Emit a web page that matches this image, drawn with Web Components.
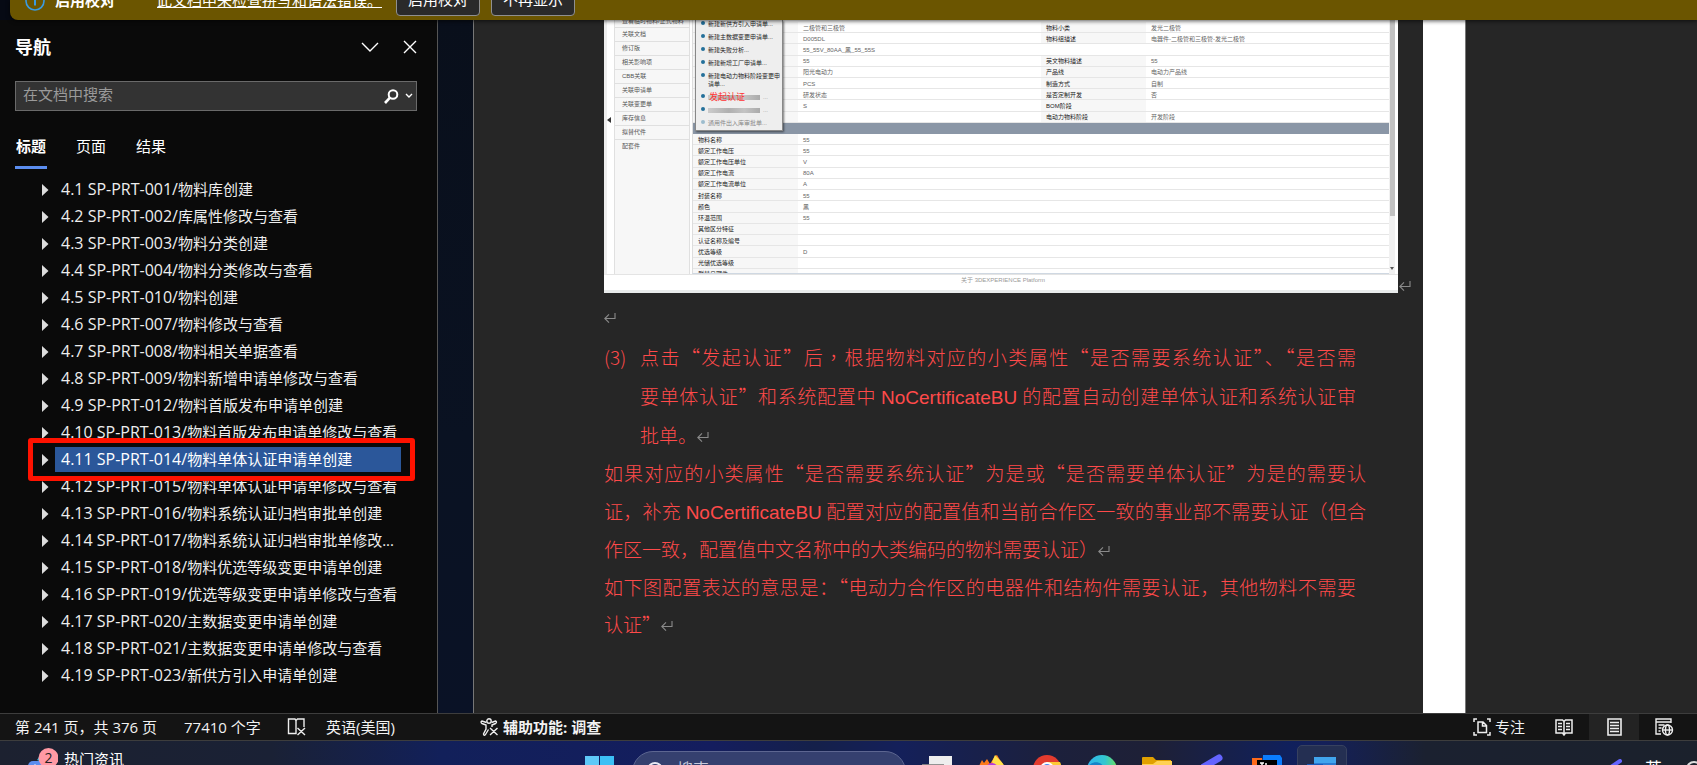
<!DOCTYPE html>
<html lang="zh-CN">
<head>
<meta charset="utf-8">
<title>Word</title>
<style>
  html, body { margin: 0; height: 100%; background: #0a0a0a; overflow: hidden; }
  body { font-family: "Open Sans", "Noto Sans CJK SC", sans-serif; font-size: 15px; color: #fff; }
</style>
</head>
<body>
<word-window></word-window>
<script>
const define = (name, html, setup) => {
  const tpl = document.createElement('template');
  tpl.innerHTML = '<style>*{box-sizing:border-box}button{font:inherit;color:inherit;background:none;border:0;padding:0;margin:0}svg{display:block;flex:none}</style>' + html;
  customElements.define(name, class extends HTMLElement {
    constructor() {
      super();
      this.attachShadow({ mode: 'open' }).append(tpl.content.cloneNode(true));
      if (setup) setup(this.shadowRoot, this);
    }
  });
};

define('word-window', `
<style>
  :host { display: flex; flex-direction: column; height: 100vh; overflow: hidden; background: #060a14; }
  main { flex: 1; min-height: 0; display: flex; }
  nav-pane { flex: none; width: 438px; }
  .gutter { flex: none; width: 35px; background: linear-gradient(#090f1b, #0a1222 60%, #0a1226); }
  doc-canvas { flex: 1; min-width: 0; }
</style>
<message-bar></message-bar>
<main><nav-pane></nav-pane><div class="gutter"></div><doc-canvas></doc-canvas></main>
<status-bar></status-bar>
<task-bar></task-bar>`);

define('message-bar', `
<style>
  :host { display: block; position: relative; z-index: 2; flex: none; padding-left: 10px; }
  .bar { height: 20px; overflow: hidden; display: flex; align-items: flex-end; padding: 0 0 4px 15px; background: #6b5500;
    border-radius: 0 0 0 8px; box-shadow: 0 1px 4px #000a; }
  svg { margin-bottom: 5px; }
  b, a { white-space: nowrap; height: 20px; }
  b { margin: 0 0 6px 10px; width: 102px; line-height: 20px; }
  a { color: #fff; text-decoration: none; border-bottom: 1px solid #fff; margin-bottom: 8px; line-height: 24px; }
  button { height: 32px; width: 84px; border: 1px solid #8f8f8f; border-radius: 4px; background: #2a2a2a; margin-left: 14px; line-height: 20px; padding-bottom: 2px; }
  button + button { margin-left: 11px; }
</style>
<div class="bar">
  <svg width="20" height="20" viewBox="0 0 20 20" fill="none" stroke="#3b9be0" stroke-width="1.6"><circle cx="10" cy="10" r="9"/><path d="M10 8.5v6M10 5v1.5" stroke-width="2"/></svg>
  <b>启用校对</b><a href="#">此文档中未检查拼写和语法错误。</a><button>启用校对</button><button>不再显示</button>
</div>`);

define('nav-pane', `
<style>
  :host { display: flex; flex-direction: column; background: #0a0a0a; border-right: 1px solid #555; padding-left: 15px; overflow: hidden; }
  header { display: flex; align-items: center; padding-top: 13px; height: 41px; padding-right: 20px; }
  h2 { flex: 1; margin: 0; font-size: 18px; line-height: 28px; }
  header button + button { margin-left: 24px; }
  .find { display: flex; align-items: center; margin: 20px 20px 0 0; height: 30px; background: #333; border: 1px solid #6a6a6a; padding-right: 3px; }
  input { flex: 1; min-width: 0; background: none; border: 0; outline: 0; color: #fff; font: inherit; line-height: 20px; padding: 0 7px 4px; }
  input::placeholder { color: #9a9a9a; opacity: 1; }
  .find button + button { margin-left: 6px; }
  .tabs { display: flex; gap: 28px; margin-top: 22px; }
  .tabs button { width: 32px; height: 36px; line-height: 26px; padding-bottom: 7px; border-bottom: 3px solid transparent; white-space: nowrap; }
  .tabs [aria-selected=true] { font-weight: bold; border-color: #5b8def; }
  ul { list-style: none; margin: 7px 0 0; padding: 0; }
</style>
<header><h2>导航</h2>
  <button aria-label="选项"><svg width="18" height="12" viewBox="0 0 18 12" fill="none" stroke="#fff" stroke-width="1.4"><path d="M1 2l8 8 8-8"/></svg></button>
  <button aria-label="关闭"><svg width="14" height="14" viewBox="0 0 14 14" fill="none" stroke="#fff" stroke-width="1.4"><path d="M1 1l12 12M13 1L1 13"/></svg></button>
</header>
<div class="find"><input type="text" aria-label="在文档中搜索" placeholder="在文档中搜索">
  <button aria-label="搜索"><svg width="15" height="15" viewBox="0 0 15 15" fill="none" stroke="#fff" stroke-width="2"><circle cx="9" cy="5.5" r="4.3"/><path d="M6 8.7L1 14" stroke-width="2.6"/></svg></button>
  <button aria-label="搜索选项"><svg width="8" height="6" viewBox="0 0 8 6" fill="none" stroke="#fff" stroke-width="1.4"><path d="M1 1l3 3 3-3"/></svg></button>
</div>
<div class="tabs" role="tablist"><button role="tab" aria-selected="true">标题</button><button role="tab">页面</button><button role="tab">结果</button></div>
<ul></ul>`, root => {
  const items = ['4.1 SP-PRT-001/|物料库创建', '4.2 SP-PRT-002/|库属性修改与查看', '4.3 SP-PRT-003/|物料分类创建', '4.4 SP-PRT-004/|物料分类修改与查看',
    '4.5 SP-PRT-010/|物料创建', '4.6 SP-PRT-007/|物料修改与查看', '4.7 SP-PRT-008/|物料相关单据查看', '4.8 SP-PRT-009/|物料新增申请单修改与查看',
    '4.9 SP-PRT-012/|物料首版发布申请单创建', '4.10 SP-PRT-013/|物料首版发布申请单修改与查看', '4.11 SP-PRT-014/|物料单体认证申请单创建',
    '4.12 SP-PRT-015/|物料单体认证申请单修改与查看', '4.13 SP-PRT-016/|物料系统认证归档审批单创建', '4.14 SP-PRT-017/|物料系统认证归档审批单修改...',
    '4.15 SP-PRT-018/|物料优选等级变更申请单创建', '4.16 SP-PRT-019/|优选等级变更申请单修改与查看', '4.17 SP-PRT-020/|主数据变更申请单创建',
    '4.18 SP-PRT-021/|主数据变更申请单修改与查看', '4.19 SP-PRT-023/|新供方引入申请单创建'];
  root.querySelector('ul').innerHTML = items.map((t, i) => {
    const [code, name] = t.split('|');
    return `<heading-item role="listitem"${i === 10 ? ' selected' : ''}><span slot="code">${code}</span>${name}</heading-item>`;
  }).join('');
});

define('heading-item', `
<style>
  :host { display: flex; align-items: center; position: relative; height: 27px; padding: 0 36px 0 27px; color: #eee; }
  .label { flex: 1; height: 25px; line-height: 24px; margin-left: 6px; padding-left: 6px; white-space: nowrap; overflow: hidden; display: flex; }
  ::slotted(span) { font-size: 16px; }
  :host([selected]) .label { background: #2b579a; color: #fff; }
  .mark { display: none; }
  :host([selected]) .mark { display: block; position: absolute; inset: -8px 22px -8px 13px; border: 5px solid #ff1200; border-radius: 3px; z-index: 1; }
</style>
<svg width="7" height="12" viewBox="0 0 7 12"><path d="M0 0l6.5 6L0 12z" fill="#ddd"/></svg>
<div class="label"><slot name="code"></slot><slot></slot></div><i class="mark"></i>`);

define('return-mark', `
<style>:host { display: inline-block; width: 12px; height: 12px; }</style>
<svg width="12" height="12" viewBox="0 0 12 12" fill="none" stroke="#8a8a8a" stroke-width="1.1"><path d="M11 1v5.5H1M5 2.3L.8 6.5 5 10.7"/></svg>`);

define('doc-canvas', `
<style>
  :host { display: flex; background: #262626; border-left: 1px solid #777; overflow: hidden; }
  article { flex: 1; min-width: 0; padding-left: 130px; font-family: "Noto Sans CJK SC", sans-serif; font-size: 19px; color: #ff4a4a; font-weight: 300; }
  .edge { flex: none; width: 43px; background: #fff; border-right: 1px solid #777; }
  .desk { flex: none; width: 231px; }
  figure { margin: 0; display: flex; align-items: flex-end; }
  part-screenshot { flex: none; width: 794px; }
  figure return-mark { margin: 0 0 1px 1px; }
  .blank { height: 44px; display: flex; align-items: center; padding-top: 6px; }
  p { margin: 0; width: 762px; }
  .step { display: flex; }
  .no { flex: none; width: 36px; line-height: 39px; }
  .lines { flex: 1; }
  .l { display: block; white-space: nowrap; height: 38px; line-height: 38px; }
  .step .l { height: 39px; line-height: 39px; }
  .tail .l { height: 37px; line-height: 37px; }
  .j { text-align: justify; text-align-last: justify; }
  .tuck { padding-right: 10px; }
  .en { font-family: "Liberation Sans", sans-serif; font-weight: 400; }
  .tc { font-family: "Noto Sans CJK TC", sans-serif; }
</style>
<article>
  <figure><part-screenshot></part-screenshot><return-mark></return-mark></figure>
  <div class="blank"><return-mark></return-mark></div>
  <p class="step"><span class="no">(3)</span><span class="lines">
    <span class="l j tuck">点击“发起认证”<span class="tc" lang="zh-TW">后，</span>根据物料对应的小类属性“是否需要系统认证”、“是否需</span>
    <span class="l j tuck">要单体认证”和系统配置中 <span class="en">NoCertificateBU</span> 的配置自动创建单体认证和系统认证审</span>
    <span class="l">批单。<return-mark></return-mark></span></span></p>
  <p><span class="l j">如果对应的小类属性“是否需要系统认证”为是或“是否需要单体认证”为是的需要认</span>
    <span class="l j">证，补充 <span class="en">NoCertificateBU</span> 配置对应的配置值和当前合作区一致的事业部不需要认证（但合</span>
    <span class="l">作区一致，配置值中文名称中的大类编码的物料需要认证）<return-mark></return-mark></span></p>
  <p class="tail"><span class="l j tuck">如下图配置表达的意思是：“电动力合作区的电器件和结构件需要认证，其他物料不需要</span>
    <span class="l">认证”<return-mark></return-mark></span></p>
</article><div class="edge"></div><div class="desk"></div>`);

define('part-screenshot', `
<style>
  :host { display: flex; flex-direction: column; height: 273px; background: #fff; color: #444; font: 400 6px/8px "Liberation Sans", "Noto Sans CJK SC", sans-serif; border-bottom: 3px solid #e8ebeb; }
  .body { height: 255px; display: flex; overflow: hidden; border-left: 3px solid #eee; border-bottom: 1px solid #e4e4e4; position: relative; }
  .fold { width: 7px; display: flex; align-items: center; }
  .fold svg { margin-bottom: 54px; }
  aside { width: 76px; background: #f7f7f7; border: solid #e0e0e0; border-width: 0 1px; display: flex; flex-direction: column; margin-right: 2px; }
  aside a { height: 14px; flex: none; line-height: 13px; border-bottom: 1px solid #e0e0e0; padding-left: 7px; color: #555; text-decoration: none; white-space: nowrap; }
  aside a:first-child { height: 8px; line-height: 3px; }
  aside a:last-child { border: 0; }
  .data { flex: 1; overflow: hidden; display: flex; flex-direction: column; border-left: 1px solid #ddd; border-bottom: 1px solid #cfd8e2; }
  table { width: 100%; border-collapse: collapse; table-layout: fixed; flex: none; }
  th, td { padding: 1px 0 0 5px; text-align: left; font-weight: 400; border-bottom: 1px solid #e6e6e6; white-space: nowrap; line-height: 8px; overflow: hidden; }
  th { background: #f7f7f7; width: 105px; color: #222; }
  td { color: #666; }
  .top { height: 101px; margin-top: 2px; }
  .low { height: 146px; }
  .band { height: 11px; background: #8a96a6; flex: none; }
  .scroll { width: 6px; margin-right: 3px; background: #f1f1f1; display: flex; flex-direction: column; justify-content: space-between; align-items: center; padding-bottom: 4px; }
  .scroll i { width: 5px; height: 196px; background: #c1c1c1; }
  footer { flex: 1; text-align: center; line-height: 11px; color: #999; padding-left: 4px; }
  menu { position: absolute; left: 88px; top: 0; width: 88px; height: 111px; margin: 0; padding: 0 0 0 5px; background: #eee; border: 1px solid #888; border-top: 0; box-shadow: 1px 1px 2px #0008; list-style: none; color: #222; }
  li { display: flex; gap: 3px; line-height: 8px; margin-bottom: 5px; position: relative; }
  li::before { content: ""; width: 4px; height: 4px; border-radius: 2px; background: #24709a; flex: none; margin-top: 1px; }
  .hid { height: 8px; color: #999; }
  .hid span { background: linear-gradient(90deg, #ccc, #b0b0b0 40%, #c4c4c4 70%, #aaa); width: 52px; height: 5px; margin-top: 2px; }
  .hid b { position: absolute; left: 8px; top: 0; font-size: 9px; font-weight: 400; line-height: 9px; color: #f33; }
  .off { color: #888; } .off::before { opacity: .4; }
</style>
<div class="body">
  <div class="fold"><svg width="4" height="6" viewBox="0 0 4 6"><path d="M4 0v6L0 3z" fill="#333"/></svg></div>
  <aside><a href="#">查看临时物料/正式物料</a><a href="#">关联文档</a><a href="#">修订版</a><a href="#">相关影响项</a><a href="#">CBB关联</a><a href="#">关联申请单</a><a href="#">关联变更单</a><a href="#">库存信息</a><a href="#">拟替代件</a><a href="#">配套件</a></aside>
  <div class="data"><table class="top"></table><div class="band"></div><table class="low"></table></div>
  <div class="scroll"><i></i><svg width="4" height="3" viewBox="0 0 4 3"><path d="M0 0h4L2 3z" fill="#555"/></svg></div>
  <menu><li>新建新供方引入申请单...</li><li>新建主数据变更申请单...</li><li>新建失败分析...</li><li>新建新增工厂申请单...</li><li>新建电动力物料阶段变更申请单...</li><li class="hid"><span></span>...<b>发起认证</b></li><li class="hid"><span></span>...</li><li class="off">通用件出入库审批单...</li></menu>
</div>
<footer>关于 3DEXPERIENCE Platform</footer>`, root => {
  root.querySelector('.top').innerHTML = [['二极管和三极管', '物料小类', '发光二极管'], ['D005DL', '物料组描述', '电器件-二极管和三极管-发光二极管'], ['55_55V_80AA_黑_55_55S'],
    ['55', '英文物料描述', '55'], ['阳光电动力', '产品线', '电动力产品线'], ['PCS', '制造方式', '自制'], ['研发状态', '是否定制开发', '否'], ['S', 'BOM阶段', ''], ['', '电动力物料阶段', '开发阶段']]
    .map(r => `<tr><th></th><td${r.length < 2 ? ' colspan="3"' : ''}>${r[0]}</td>${r[1] ? `<th>${r[1]}</th><td>${r[2]}</td>` : ''}</tr>`).join('');
  root.querySelector('.low').innerHTML = [['物料名称', '55'], ['额定工作电压', '55'], ['额定工作电压单位', 'V'], ['额定工作电流', '80A'], ['额定工作电流单位', 'A'], ['封装名称', '55'],
    ['颜色', '黑'], ['环温范围', '55'], ['其他区分特征', ''], ['认证名称及编号', ''], ['优选等级', 'D'], ['光储优选等级', ''], ['群替日期件', '']]
    .map(r => `<tr><th>${r[0]}</th><td>${r[1]}</td></tr>`).join('');
});

define('status-bar', `
<style>
  :host { display: flex; align-items: stretch; flex: none; height: 28px; background: #141414; border: solid #3d3d3d; border-width: 1px 0; padding-left: 15px; color: #f2f2f2; line-height: 26px; white-space: nowrap; }
  button { display: flex; align-items: center; gap: 4px; }
  .pages { width: 169px; } .words { width: 103px; } .proof { width: 39px; } .lang { width: 154px; }
  .acc { font-weight: bold; }
  .sp { flex: 1; }
  .v { width: 50px; justify-content: center; }
  .on { background: #232323; }
  .focus { margin-right: 14px; }
  .end { width: 8px; }
</style>
<button class="pages">第 241 页，共 376 页</button><button class="words">77410 个字</button>
<button class="proof" aria-label="校对"><svg width="19" height="18" viewBox="0 0 19 18" fill="none" stroke="#eee" stroke-width="1.4"><path d="M9 15.5H1.5V1H8l1 1.5v13zM9 2.5L10.5 1h6.5v8M10.5 10l7.5 7M18 10l-7.500 7"/></svg></button>
<button class="lang">英语(美国)</button>
<button class="acc"><svg width="19" height="18" viewBox="0 0 19 18" fill="none" stroke="#eee" stroke-width="1.4"><circle cx="9" cy="3" r="2.200"/><path d="M6.500 4.500L2 3c-1.500.5-1 2 0 2.500l4 1.500v4l-2.500 5c0 1.500 1.500 1.500 2 .5l3-5M11.500 4.500L15.500 3c1.500.5 1 2 0 2.500l-3.500 1.500v2M10 10l7.500 7M17.500 10L10 17"/></svg>辅助功能: 调查</button>
<span class="sp"></span>
<button class="focus"><svg width="18" height="18" viewBox="0 0 18 18" fill="none" stroke="#eee" stroke-width="1.500"><path d="M1 4V1h3M14 1h3v3M17 14v3h-3M4 17H1v-3M5 4h5l3.500 3.500V14.500H5zM9.500 4v4h4"/></svg>专注</button>
<button class="v" aria-label="阅读视图"><svg width="18" height="17" viewBox="0 0 18 17" fill="none" stroke="#eee" stroke-width="1.500"><path d="M9 2.500L7.500 1H1v13h6.500L9 16l1.500-2H17V1h-6.500L9 2.500V16M3 4.500h4M3 7.500h4M3 10.500h4M11 4.500h4M11 7.500h4M11 10.500h4"/></svg></button>
<button class="v on" aria-label="页面视图"><svg width="15" height="18" viewBox="0 0 15 18" fill="none" stroke="#eee" stroke-width="1.600"><path d="M1 1h13v16H1zM3 4.500h9M3 7.500h9M3 10.500h9M3 13.500h9"/></svg></button>
<button class="v" aria-label="Web 版式"><svg width="19" height="18" viewBox="0 0 19 18" fill="none" stroke="#eee" stroke-width="1.400"><path d="M6 16H1V1h15v4M1 4h15M3.500 7h6M3.500 10h3M3.500 13h2"/><circle cx="12.500" cy="12" r="5" fill="#141414"/><ellipse cx="12.500" cy="12" rx="2" ry="5"/><path d="M7.500 12h10"/></svg></button>
<span class="end"></span>`);

define('task-bar', `
<style>
  :host { display: flex; align-items: flex-start; flex: none; height: 24px; overflow: hidden; padding-left: 28px;
    background: linear-gradient(90deg, #1c2130 0, #1a2135 16%, #12205a 26%, #141d5e 42%, #14204a 48%, #14205a 53%, #1c203c 62%, #1e2036 68%, #10205c 76%, #14205a 78%, #1b2130 84%, #1b212c 100%); }
  .news { display: flex; width: 557px; line-height: 20px; padding-top: 8px; gap: 6px; }
  .news svg { margin-top: -2px; }
  .start { margin-top: 15px; }
  .search { display: flex; flex: none; width: 274px; height: 42px; margin: 10px 3px 0 18px; border: 1px solid #5d6691; border-radius: 21px; background: #35406f; padding: 8px 0 0 14px; gap: 11px; align-items: flex-start; }
  .search svg { margin-top: 2px; }
  .search input { font: inherit; font-size: 16px; line-height: 18px; background: none; border: 0; padding: 0; width: 150px; height: 18px; }
  input::placeholder { color: #c5c9dc; opacity: 1; }
  .app { width: 55px; flex: none; display: flex; justify-content: center; padding-top: 13px; }
  .on { width: 50px; margin: 4px 2px 0 3px; height: 48px; padding-top: 9px; border: 1px solid #37415f; border-radius: 5px; background: #242f52; }
  .sp { flex: 1; }
  .tray { display: flex; gap: 23px; }
  .tray span { font-size: 17px; line-height: 20px; padding-top: 18px; }
  .tray svg { margin-top: 18px; }
</style>
<button class="news"><svg width="30" height="30" viewBox="0 0 30 30"><path d="M0 19a5 5 0 0 1 5-5h20v16H0z" fill="#5b8def"/><path d="M9 13l4-6h6v10z" fill="#2bb5d8"/><path d="M3 22l4-5 4 5z" fill="#fff"/><circle cx="20.500" cy="11" r="10" fill="#ff99a4"/><text x="20.500" y="16" font-family="Open Sans" font-size="14" text-anchor="middle" fill="#222">2</text></svg><span>热门资讯</span></button>
<button class="start" aria-label="开始"><svg width="29" height="29"><path d="M0 0h14v14H0z" fill="#5fc9f8"/><path d="M15 0h14v14H15z" fill="#3cc0f5"/></svg></button>
<label class="search"><svg width="19" height="19" viewBox="0 0 19 19" fill="none" stroke="#e8eaf4" stroke-width="2"><circle cx="8" cy="8" r="7"/></svg><input type="text" placeholder="搜索" aria-label="搜索"></label>
<button class="app" aria-label="任务视图"><svg width="30" height="30"><path d="M7 2h23v20H7z" fill="#eee"/><path d="M0 10h22v18H0z" fill="#888" fill-opacity=".9"/></svg></button>
<button class="app" aria-label="Firefox"><svg width="28" height="30"><path d="M1 12l3-6 2 3 3-4 3 5 5-8 2-1 3 5 3 4 3 6v10H0z" fill="#ff7a1a"/><path d="M14 8l3-7c3 4 9 7 10 14l-6 3z" fill="#ffe14a"/><circle cx="14" cy="15" r="6" fill="#b53be0"/></svg></button>
<button class="app" aria-label="Chrome"><svg width="28" height="28"><circle cx="14" cy="15" r="14" fill="#e33b2e"/><path d="M14 8h13a14 14 0 0 1 1 10L14 20z" fill="#fdc935"/><path d="M0 12l8 8-4 5a14 14 0 0 1-4-13z" fill="#2ba24c"/><circle cx="14" cy="15" r="7" fill="#fff"/><circle cx="14" cy="15" r="5" fill="#4285f4"/></svg></button>
<button class="app" aria-label="Edge"><svg width="30" height="30"><defs><linearGradient id="e"><stop offset="0" stop-color="#2fb5ee"/><stop offset=".6" stop-color="#33c6d0"/><stop offset="1" stop-color="#6be060"/></linearGradient></defs><circle cx="15" cy="16" r="15" fill="url(#e)"/><path d="M1 13c4-7 13-5 15-1v14H4z" fill="#1583c8"/></svg></button>
<button class="app" aria-label="文件资源管理器"><svg width="30" height="26"><path d="M0 4q0-1 1-1h10l3 3h15v8H0z" fill="#e0a000"/><path d="M0 10h11l4-3h15v19H0z" fill="#ffd154"/></svg></button>
<button class="app" aria-label="钢笔"><svg width="22" height="20"><path d="M1 14L18 4" stroke="#6464ff" stroke-width="7" stroke-linecap="round"/></svg></button>
<button class="app" aria-label="IDE"><svg width="30" height="30" viewBox="0 0 30 30"><path d="M0 4h10l4 26H0z" fill="#ff6a1a"/><path d="M11 1h17l2 3v26H9z" fill="#0a7cff"/><path d="M5 6h20v20H5z" fill="#000"/><path d="M8 9h4M10 9v5M14 9v5" stroke="#fff" stroke-width="1.500"/></svg></button>
<button class="app on" aria-label="Word"><svg width="30" height="28"><path d="M7 2h22v26H7z" fill="#41a5ee"/><path d="M7 8h22v20H7z" fill="#2b7cd3"/><path d="M0 9h16v18H0z" fill="#185abd"/></svg></button>
<span class="sp"></span>
<div class="tray"><svg width="13" height="12"><path d="M2 8L11 2" stroke="#6464ff" stroke-width="4" stroke-linecap="round"/></svg><span>英</span><svg width="12" height="16" fill="none" stroke="#ddd" stroke-width="2"><circle cx="9" cy="10" r="7"/></svg></div>`);
</script>
</body>
</html>
